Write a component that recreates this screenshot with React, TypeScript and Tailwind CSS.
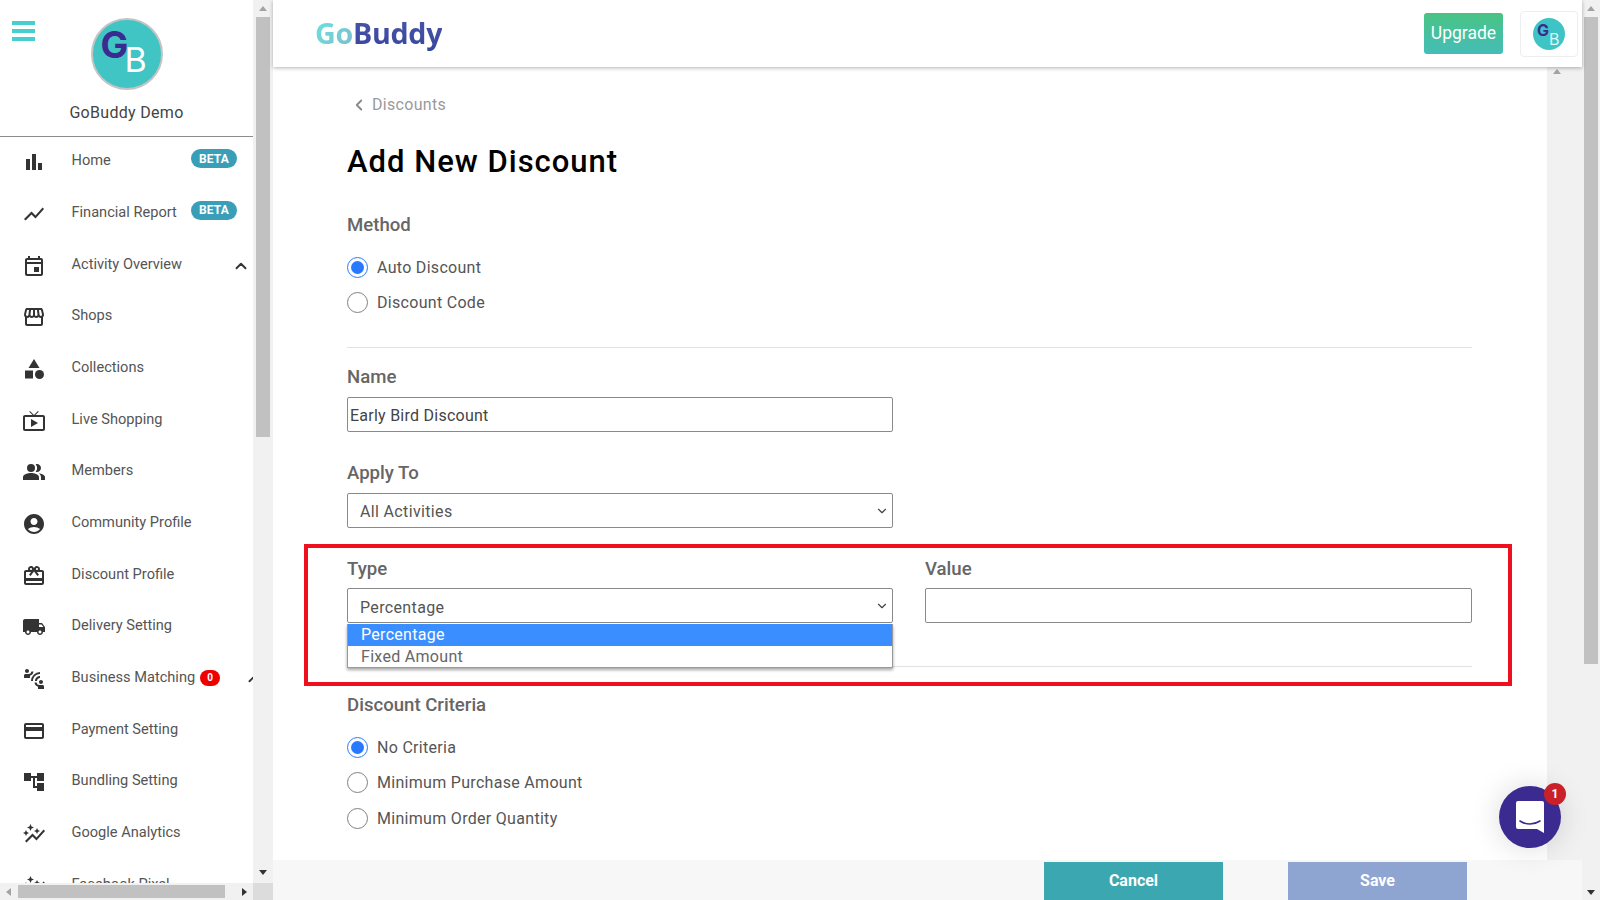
import React from 'react';
import { ChevronDown, ChevronLeft, ChevronUp } from 'lucide-react';
import {
  MdBarChart,
  MdShowChart,
  MdOutlineEvent,
  MdOutlineStorefront,
  MdCategory,
  MdOutlineLiveTv,
  MdPeopleAlt,
  MdAccountCircle,
  MdOutlineRedeem,
  MdLocalShipping,
  MdConnectWithoutContact,
  MdOutlinePayment,
  MdAccountTree,
  MdAutoGraph,
} from 'react-icons/md';

const navItems = [
  { label: 'Home', icon: MdBarChart, beta: true },
  { label: 'Financial Report', icon: MdShowChart, beta: true },
  { label: 'Activity Overview', icon: MdOutlineEvent, open: true },
  { label: 'Shops', icon: MdOutlineStorefront },
  { label: 'Collections', icon: MdCategory },
  { label: 'Live Shopping', icon: MdOutlineLiveTv },
  { label: 'Members', icon: MdPeopleAlt },
  { label: 'Community Profile', icon: MdAccountCircle },
  { label: 'Discount Profile', icon: MdOutlineRedeem },
  { label: 'Delivery Setting', icon: MdLocalShipping },
  { label: 'Business Matching', icon: MdConnectWithoutContact, count: 0 },
  { label: 'Payment Setting', icon: MdOutlinePayment },
  { label: 'Bundling Setting', icon: MdAccountTree },
  { label: 'Google Analytics', icon: MdAutoGraph },
  { label: 'Facebook Pixel', icon: MdAutoGraph },
];

const Arrow: React.FC<{ dir: 'up' | 'down' | 'left' | 'right'; className?: string }> = ({ dir, className }) => {
  const points = {
    up: '0,6 4,1 8,6',
    down: '0,2 8,2 4,7',
    left: '6,0 6,8 1,4',
    right: '2,0 2,8 7,4',
  }[dir];
  return (
    <svg width="8" height="8" viewBox="0 0 8 8" className={className}>
      <polygon points={points} fill="currentColor" />
    </svg>
  );
};

const Radio: React.FC<{ checked?: boolean; label: string; className?: string }> = ({ checked, label, className }) => (
  <div className={`flex items-center h-6 ${className ?? ''}`}>
    <span
      className={`w-[21px] h-[21px] -mt-[2px] rounded-full border flex items-center justify-center bg-white ${
        checked ? 'border-[#2979ff]' : 'border-[#808080]'
      }`}
    >
      {checked && <span className="w-[13px] h-[13px] rounded-full bg-[#2979ff]" />}
    </span>
    <span className="ml-[9px] text-[16px] text-[#555] tracking-[0.3px]">{label}</span>
  </div>
);

const FieldLabel: React.FC<{ children: React.ReactNode; className?: string }> = ({ children, className }) => (
  <div className={`h-6 leading-6 text-[18.6px] font-medium text-[#666] ${className ?? ''}`}>{children}</div>
);

const SelectBox: React.FC<{ value: string; clipped?: boolean; className?: string }> = ({ value, clipped, className }) => (
  <div className={`h-[35px] border border-[#8a8a8a] rounded-[2px] bg-white flex items-center pl-[12px] pr-[3px] ${className ?? ''}`}>
    <span className={`flex-1 h-[22px] overflow-hidden text-[16px] text-[#555] tracking-[0.35px] ${clipped ? 'leading-[26px]' : 'leading-[24px]'}`}>
      {value}
    </span>
    <ChevronDown size={14} strokeWidth={2} className="text-[#444]" />
  </div>
);

const Avatar: React.FC<{ small?: boolean }> = ({ small }) =>
  small ? (
    <div className="relative w-8 h-8 rounded-full bg-[#3fc4c6] overflow-hidden font-['Inter',sans-serif]">
      <span className="absolute left-[4px] top-[3px] text-[16px] leading-[18px] font-bold text-[#3b2a8f]">G</span>
      <span className="absolute left-[16px] top-[12px] text-[16px] leading-[18px] text-[#d8f8f8]">B</span>
    </div>
  ) : (
    <div className="relative w-[72px] h-[72px] rounded-full bg-[#40c4c4] border-2 border-[#c4c4c4] font-['Inter',sans-serif]">
      <span className="absolute left-[8px] top-[5px] text-[37px] leading-[40px] font-bold text-[#3b2a8f]">G</span>
      <span className="absolute left-[32px] top-[20px] text-[34px] leading-[40px] text-white">B</span>
    </div>
  );

const Sidebar = () => (
  <aside className="w-[273px] h-full flex flex-col shrink-0 bg-white">
    <div className="flex-1 min-h-0 flex">
      <div className="w-[253px] overflow-hidden">
        <div className="relative h-[137px] border-b border-[#8c8c8c] flex flex-col items-center pt-[18px]">
          <div className="absolute left-3 top-[21px] w-[23px] flex flex-col gap-[4px]">
            <span className="h-[4px] bg-[#45cfcf]" />
            <span className="h-[4px] bg-[#45cfcf]" />
            <span className="h-[4px] bg-[#45cfcf]" />
          </div>
          <Avatar />
          <div className="mt-[11px] text-[16px] leading-6 text-[#444] tracking-[0.3px]">GoBuddy Demo</div>
        </div>
        <nav>
          {navItems.map(item => (
            <div key={item.label} className="h-[51.67px] flex items-center pb-[3px] whitespace-nowrap">
              <span className="w-[71.5px] pl-[22px] shrink-0 pt-[2px]">
                <item.icon size={24} className="text-[#333]" />
              </span>
              <span className="text-[14.6px] text-[#555]">{item.label}</span>
              {item.beta && (
                <span className="absolute left-[191px] -mt-[5px] w-[46px] h-[19px] rounded-full bg-[#399fb9] text-white text-[12px] font-bold flex items-center justify-center tracking-[0.2px]">
                  BETA
                </span>
              )}
              {item.open && <ChevronUp size={18} strokeWidth={2.5} className="absolute left-[232px] text-[#333] mt-[3px]" />}
              {item.count !== undefined && (
                <>
                  <span className="ml-[5px] shrink-0 w-5 h-4 rounded-full bg-[#ee0000] text-white text-[10px] font-bold flex items-center justify-center">
                    {item.count}
                  </span>
                  <ChevronUp size={18} strokeWidth={2.5} className="ml-[25px] text-[#333] mt-[3px] shrink-0" />
                </>
              )}
            </div>
          ))}
        </nav>
      </div>
      <div className="w-[20px] bg-[#f1f1f1] flex flex-col items-center">
        <div className="h-[17px] flex items-center justify-center text-[#a3a3a3]">
          <Arrow dir="up" />
        </div>
        <div className="w-[14px] h-[420px] bg-[#c1c1c1]" />
        <div className="flex-1" />
        <div className="h-[20px] pb-[3px] flex items-center justify-center text-[#333]">
          <Arrow dir="down" />
        </div>
      </div>
    </div>
    <div className="h-[17px] flex bg-[#f1f1f1] shrink-0">
      <div className="w-[18px] flex items-center justify-center text-[#a3a3a3]">
        <Arrow dir="left" />
      </div>
      <div className="w-[207px] my-[2px] bg-[#c1c1c1]" />
      <div className="flex-1 flex items-center justify-end pr-[5px] text-[#333]">
        <Arrow dir="right" />
      </div>
      <div className="w-[20px] bg-[#dcdcdc]" />
    </div>
  </aside>
);

const Header = () => (
  <header className="relative z-10 h-[67px] shrink-0 bg-white shadow-[0_1px_4px_rgba(0,0,0,0.3)] flex items-center pl-[42px] pr-[4px]">
    <div className="flex-1 -mt-[2px] text-[28.7px] font-bold font-['Open_Sans',sans-serif] tracking-[-0.3px]">
      <span className="bg-gradient-to-br from-[#5ee8dc] to-[#7fb9cf] bg-clip-text text-transparent">Go</span>
      <span className="bg-gradient-to-b from-[#4a55a8] to-[#36479e] bg-clip-text text-transparent">Buddy</span>
    </div>
    <button className="w-[79px] h-[41px] rounded-[3px] bg-gradient-to-b from-[#49c382] to-[#45bdb8] text-white text-[17.5px] font-normal">
      Upgrade
    </button>
    <div className="ml-[17px] w-[58px] h-[46px] rounded-[4px] border border-[#eeeeee] flex items-center justify-center">
      <Avatar small />
    </div>
  </header>
);

const DiscountForm = () => (
  <div className="flex-1 min-w-0 overflow-hidden bg-white pl-[74px] pr-[75px] pt-[26px]">
    <div className="h-6 flex items-center text-[#9a9a9a] text-[16px] tracking-[0.3px]">
      <ChevronLeft size={18} strokeWidth={2.5} className="ml-[3px] mr-[4px] text-[#8a8a8a]" />
      Discounts
    </div>
    <h1 className="mt-[25px] h-10 leading-10 text-[31px] font-medium text-black tracking-[1px]">Add New Discount</h1>

    <FieldLabel className="mt-[31px]">Method</FieldLabel>
    <Radio checked label="Auto Discount" className="mt-[19px]" />
    <Radio label="Discount Code" className="mt-[11px]" />
    <div className="mt-[32px] h-px bg-[#e2e2e2]" />

    <FieldLabel className="mt-[17px]">Name</FieldLabel>
    <div className="mt-[8px] w-[546px]">
      <input
        readOnly
        value="Early Bird Discount"
        className="w-full h-[35px] border border-[#8a8a8a] rounded-[2px] pl-[2px] pt-[2px] text-[16px] text-[#444] tracking-[0.25px] outline-none"
      />
    </div>

    <FieldLabel className="mt-[29px]">Apply To</FieldLabel>
    <SelectBox value="All Activities" className="mt-[8px] w-[546px]" />

    <div className="relative mt-[29px] grid grid-cols-[546px_1fr] gap-x-[32px]">
      <div className="absolute left-[-43px] right-[-40px] top-[-13px] h-[142px] border-[4px] border-[#ee0f1f] pointer-events-none" />
      <div className="relative">
        <FieldLabel>Type</FieldLabel>
        <SelectBox value="Percentage" clipped className="mt-[7px]" />
        <div className="absolute left-0 right-0 top-[67px] z-10 h-[44px] bg-white border border-[#9a9a9a] border-t-0 shadow-[0_2px_3px_rgba(0,0,0,0.35)] text-[16px] tracking-[0.3px]">
          <div className="h-[22px] leading-[22px] pl-[13px] bg-[#3b8eff] text-white">Percentage</div>
          <div className="h-[21px] leading-[21px] pl-[13px] text-[#666]">Fixed Amount</div>
        </div>
      </div>
      <div>
        <FieldLabel>Value</FieldLabel>
        <input readOnly className="mt-[7px] w-full h-[35px] border border-[#8a8a8a] rounded-[2px] outline-none" />
      </div>
    </div>
    <div className="mt-[43px] h-px bg-[#e2e2e2]" />

    <FieldLabel className="mt-[26px]">Discount Criteria</FieldLabel>
    <Radio checked label="No Criteria" className="mt-[19px]" />
    <Radio label="Minimum Purchase Amount" className="mt-[11px]" />
    <Radio label="Minimum Order Quantity" className="mt-[12px]" />
  </div>
);

const ChatWidget = () => (
  <div className="absolute left-[1499px] top-[786px] z-20 w-[62px] h-[62px] rounded-full bg-[#3b2a8f] shadow-[0_0_30px_rgba(0,0,0,0.15)] flex items-center justify-center">
    <svg width="30" height="34" viewBox="0 0 30 34">
      <path d="M3 1h24a2 2 0 0 1 2 2v30l-7-4H3a2 2 0 0 1-2-2V3a2 2 0 0 1 2-2z" fill="#fff" />
      <path d="M5 21c6 4 14 4 20 0" fill="none" stroke="#3b2a8f" strokeWidth="1.6" strokeLinecap="round" />
    </svg>
    <span className="absolute left-[45px] top-[-3px] w-[22px] h-[22px] rounded-full bg-[#c9202a] text-white text-[12px] font-bold flex items-center justify-center">
      1
    </span>
  </div>
);

export default function App() {
  return (
    <div className="relative w-[1600px] h-[900px] overflow-hidden flex bg-white font-['Roboto',sans-serif]">
      <Sidebar />
      <main className="flex-1 min-w-0 flex flex-col">
        <Header />
        <div className="flex-1 min-h-0 flex">
          <DiscountForm />
          <div className="w-[35px] bg-[#f1f1f1] flex justify-center text-[#a3a3a3]">
            <Arrow dir="up" className="-ml-4 mt-[1px]" />
          </div>
        </div>
        <div className="h-[40px] shrink-0 bg-[#f7f7f7] flex items-end pl-[771px]">
          <button className="w-[179px] h-[38px] bg-[#3ba7b0] text-white text-[16px] font-bold">Cancel</button>
          <button className="ml-[65px] w-[179px] h-[38px] bg-[#8fa5d1] text-white text-[16px] font-bold">Save</button>
        </div>
      </main>
      <div className="w-[18px] shrink-0 bg-[#f1f1f1] flex flex-col items-center">
        <div className="h-[17px] flex items-center justify-center text-[#a3a3a3]">
          <Arrow dir="up" />
        </div>
        <div className="w-[14px] h-[647px] bg-[#c1c1c1]" />
        <div className="flex-1" />
        <div className="h-[17px] flex items-center justify-center text-[#333]">
          <Arrow dir="down" />
        </div>
      </div>
      <ChatWidget />
    </div>
  );
}
